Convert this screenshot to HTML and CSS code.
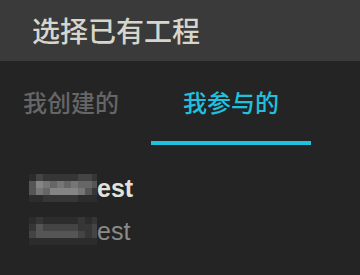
FILE: index.html
```html
<!DOCTYPE html>
<html lang="zh-CN">
<head>
<meta charset="utf-8">
<link rel="stylesheet" href="styles.css">
</head>
<body>
<div class="app">
  <header class="header"><h1 class="title">选择已有工程</h1></header>
  <nav class="tabs">
    <div class="tab"><span class="tab-label">我创建的</span></div>
    <div class="tab active"><span class="tab-label">我参与的</span><span class="indicator"></span></div>
  </nav>
  <ul class="list">
    <li class="item primary">
      <div class="mosaic">
        <i class="s0"></i><i class="s2"></i><i class="s1"></i><i class="s1"></i><i class="s1"></i><i class="s1"></i><i class="s1"></i><i class="s2"></i><i class="s2"></i><i class="s1"></i>
        <i class="s3"></i><i class="s6"></i><i class="s5"></i><i class="s4"></i><i class="s5"></i><i class="s4"></i><i class="s5"></i><i class="s4"></i><i class="s4"></i><i class="s3"></i>
        <i class="s3"></i><i class="s5"></i><i class="s4"></i><i class="s6"></i><i class="s6"></i><i class="s6"></i><i class="s6"></i><i class="s5"></i><i class="s3"></i><i class="s1"></i>
        <i class="s0"></i><i class="s0"></i><i class="s1"></i><i class="s1"></i><i class="s1"></i><i class="s1"></i><i class="s1"></i><i class="s0"></i><i class="s0"></i><i class="s0"></i>
      </div>
      <span class="name">est</span>
    </li>
    <li class="item secondary">
      <div class="mosaic">
        <i class="s0"></i><i class="s1"></i><i class="s0"></i><i class="s0"></i><i class="s0"></i><i class="s0"></i><i class="s0"></i><i class="s1"></i><i class="s0"></i><i class="s1"></i>
        <i class="s1"></i><i class="s3"></i><i class="s2"></i><i class="s2"></i><i class="s2"></i><i class="s2"></i><i class="s2"></i><i class="s1"></i><i class="s1"></i><i class="s2"></i>
        <i class="s2"></i><i class="s3"></i><i class="s3"></i><i class="s3"></i><i class="s3"></i><i class="s3"></i><i class="s3"></i><i class="s2"></i><i class="s1"></i><i class="s2"></i>
        <i class="s0"></i><i class="s0"></i><i class="s0"></i><i class="s0"></i><i class="s0"></i><i class="s0"></i><i class="s0"></i><i class="s0"></i><i class="s0"></i><i class="s0"></i>
      </div>
      <span class="name">est</span>
    </li>
  </ul>
</div>
</body>
</html>
```
FILE: styles.css
```css
html, body {
  margin: 0;
  padding: 0;
  background: #242424;
}
.app {
  width: 360px;
  height: 275px;
  overflow: hidden;
  background: #242424;
  font-family: "Noto Sans CJK SC", "Liberation Sans", sans-serif;
}
.header {
  height: 61px;
  background: #3a3a3a;
  display: flex;
  align-items: center;
  padding-left: 32px;
  padding-bottom: 2px;
  box-sizing: border-box;
}
.title {
  margin: 0;
  font-size: 28px;
  font-weight: 500;
  line-height: 1;
  color: #d6d6cd;
}
.tabs {
  display: flex;
  margin-left: -9px;
  height: 84px;
}
.tab {
  width: 160px;
  flex: none;
  display: flex;
  flex-direction: column;
  align-items: center;
}
.tab-label {
  height: 80px;
  display: flex;
  align-items: center;
  font-size: 24px;
  font-weight: 500;
  color: #666666;
}
.tab.active .tab-label {
  color: #1fc1df;
}
.indicator {
  align-self: stretch;
  height: 4px;
  background: #1fc1df;
}
.list {
  list-style: none;
  margin: 0;
  padding: 21px 0 0 29px;
}
.item {
  height: 43px;
  display: flex;
  align-items: center;
}
.mosaic {
  display: grid;
  grid-template-columns: repeat(9, 7px) 5px;
  grid-template-rows: repeat(4, 7px);
}
.mosaic i { display: block; }
.s0 { background: #2c2c2c; }
.s1 { background: #363636; }
.s2 { background: #444444; }
.s3 { background: #555555; }
.s4 { background: #666666; }
.s5 { background: #767676; }
.s6 { background: #858585; }
.name {
  font-family: "Liberation Sans", Arial, sans-serif;
  font-size: 25px;
  line-height: 28px;
}
.primary .name {
  font-weight: 700;
  color: #e2e2da;
}
.secondary .name {
  font-weight: 400;
  color: #8a8a8a;
}
```
